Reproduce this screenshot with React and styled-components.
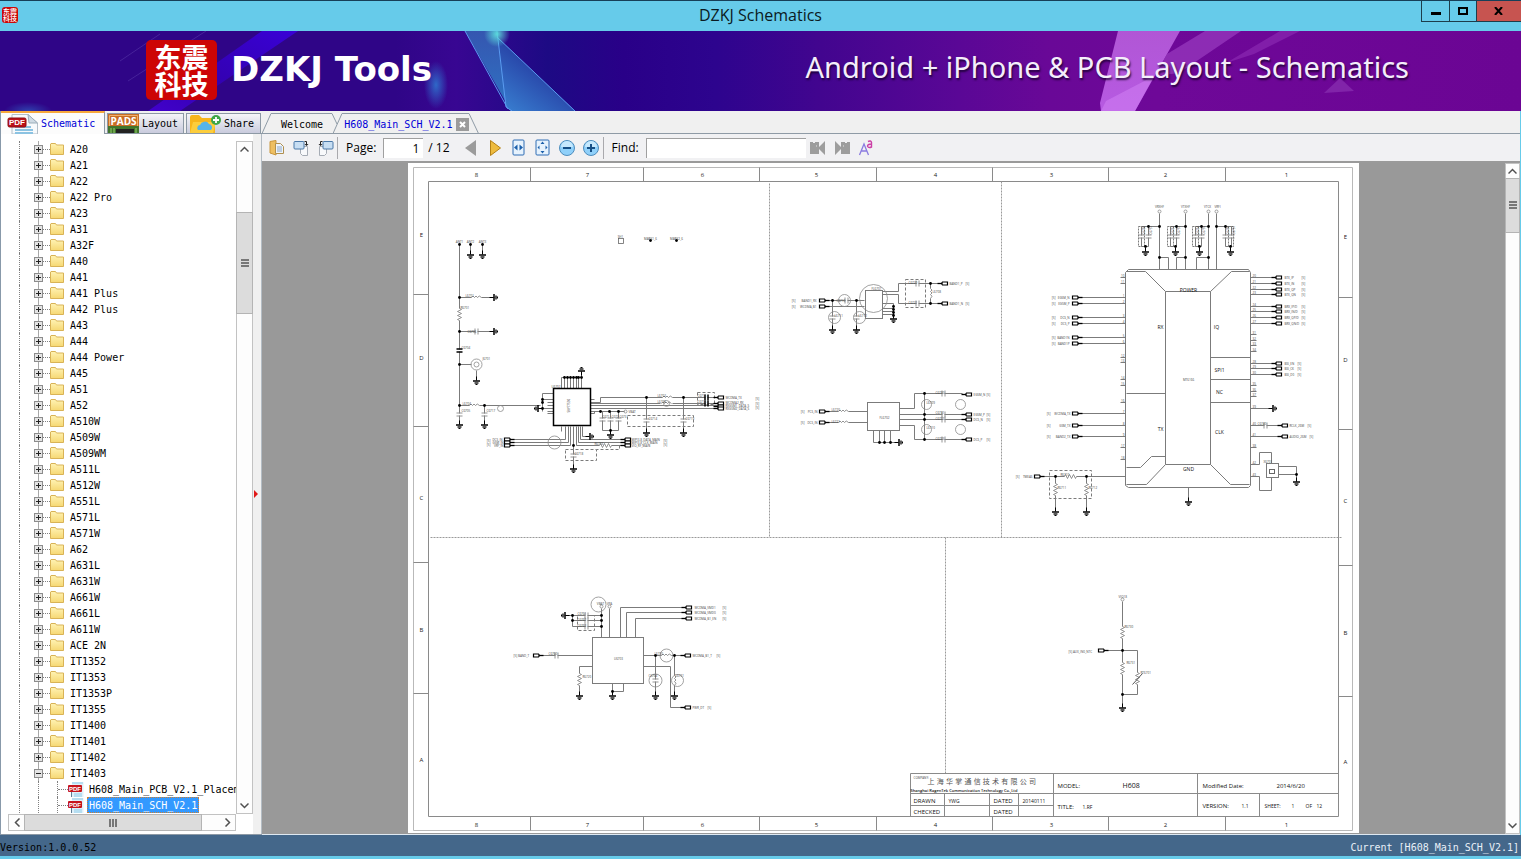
import React from 'react';
import styled, { createGlobalStyle } from 'styled-components';

const mono = '"DejaVu Sans Mono", "Liberation Mono", monospace';
const sans = '"Open Sans", "Noto Sans", sans-serif';
const cjk = '"Noto Sans CJK SC", sans-serif';

const GlobalStyle = createGlobalStyle`
  * { box-sizing: border-box; }
  html, body, #root { height: 100%; }
  body { margin: 0; overflow: hidden; font-family: ${mono}; font-size: 10px; color: #000; }
  button, input { font: inherit; color: inherit; margin: 0; padding: 0; border: 0; background: none; border-radius: 0; }
  svg { display: block; flex: none; }
  ul { list-style: none; margin: 0; padding: 0; }
`;

const Window = styled.div`
  display: flex;
  flex-direction: column;
  height: 100%;
  border-bottom: 3px solid #66cbea;
  background: #f0f0f0;
`;

const TitleBar = styled.header`
  display: grid;
  grid-template-columns: 1fr auto 1fr;
  flex: none;
  height: 31px;
  border-top: 1px solid #173f58;
  background: #66cbea;
`;

const TitleText = styled.h1`
  margin: 0;
  font: 400 16px/29px ${sans};
  color: #0b1a22;
`;

const AppIcon = styled.div`
  width: 16px;
  height: 16px;
  margin: 6px 0 0 2px;
  padding-top: 1px;
  border-radius: 3px;
  background: #cb0808;
  color: #fff;
  font: 500 7px/7px ${cjk};
  text-align: center;
`;

const WindowButtons = styled.div`
  display: flex;
  justify-self: end;
  height: 21px;
  border-left: 1px solid #1d3d4b;
  border-bottom: 1px solid #1d3d4b;
`;

const WindowButton = styled.button`
  display: flex;
  align-items: center;
  justify-content: center;
  width: ${(p) => (p.$close ? 45 : 27)}px;
  background: ${(p) => (p.$close ? '#c75450' : 'transparent')};
  & + & { border-left: 1px solid #1d3d4b; }
`;

const Banner = styled.div`
  position: relative;
  display: flex;
  align-items: center;
  flex: none;
  height: 80px;
  padding: 0 112px 0 146px;
  overflow: hidden;
  color: #fff;
  background: linear-gradient(90deg, #2f0587 0, #2f0587 26%, #380692 30%, #1d0a84 36%, #290088 41%, #2d048e 47%, #42058f 54%, #5a0796 63%, #690897 69%, #6e0898 76%, #6b0594 100%);
`;

const BannerArt = styled.svg`
  position: absolute;
  inset: 0;
`;

const Logo = styled.div`
  position: relative;
  width: 71px;
  height: 60px;
  margin-top: -2px;
  padding: 3px 6px;
  border-radius: 5px;
  background: #cd0505;
  font: 700 27px/27px ${cjk};
  text-align: center;
`;

const Brand = styled.div`
  position: relative;
  flex: 1;
  margin: -4px 0 0 14px;
  font: 700 34px/40px "DejaVu Sans", sans-serif;
  white-space: nowrap;
`;

const Slogan = styled.div`
  position: relative;
  margin-top: -8px;
  font: 400 29px/36px "Noto Sans", sans-serif;
  color: #f4eefb;
  text-shadow: 1px 2px 2px rgba(20, 0, 40, 0.8);
  white-space: nowrap;
`;

const Workspace = styled.div`
  display: flex;
  flex: 1;
  min-height: 0;
  border-right: 1px solid #66cbea;
`;

const Sidebar = styled.aside`
  display: flex;
  flex-direction: column;
  flex: none;
  width: 262px;
  border-left: 1px solid #8899aa;
`;

const SideTabs = styled.nav`
  display: flex;
  align-items: flex-end;
  gap: 2px;
  height: 23px;
  border-bottom: 1px solid #8d99a5;
`;

const SideTab = styled.button`
  display: flex;
  align-items: center;
  gap: ${(p) => (p.$active ? 2 : 3)}px;
  width: ${(p) => p.$width}px;
  height: ${(p) => (p.$active ? 23 : 20)}px;
  margin-bottom: ${(p) => (p.$active ? -1 : 0)}px;
  padding-left: ${(p) => (p.$active ? 6 : 0)}px;
  overflow: hidden;
  border: 1px solid #8d99a5;
  border-bottom: 0;
  border-top: ${(p) => (p.$active ? '2px solid #f7a83c' : '1px solid #8d99a5')};
  border-left-width: ${(p) => (p.$active ? 0 : 1)}px;
  background: ${(p) => (p.$active ? '#fcfcfc' : 'linear-gradient(#f5f5f8, #c9cbdd)')};
  color: ${(p) => (p.$active ? '#0000d8' : '#000')};
`;

const SideBody = styled.div`
  display: flex;
  flex: 1;
  min-height: 0;
  border-bottom: 1px solid #8d99a5;
`;

const TreePane = styled.div`
  display: grid;
  grid-template-columns: 1fr 17px;
  grid-template-rows: 1fr 17px;
  flex: 1;
  min-width: 0;
  padding: 7px 0 3px 7px;
  background: #fff;
`;

const Splitter = styled.div`
  display: flex;
  align-items: center;
  width: 9px;
  padding-top: 20px;
  border-right: 1px solid #b3bcc4;
  background: #f0f0f0;
`;

const Tree = styled.ul`
  min-height: 0;
  overflow: hidden;
  background: #fff;
`;

const TreeRow = styled.li`
  display: flex;
  align-items: center;
  height: 16px;
  white-space: nowrap;
`;

const Guide = styled.span`
  flex: none;
  align-self: stretch;
  width: ${(p) => p.$width}px;
  margin-left: ${(p) => p.$left}px;
  border-left: 1px dotted #808080;
`;

const Branch = styled.span`
  flex: none;
  width: ${(p) => p.$width}px;
  border-top: 1px dotted #808080;
`;

const ExpanderCell = styled.span`
  display: flex;
  align-items: center;
  justify-content: center;
  flex: none;
  width: 9px;
  height: 16px;
  background: linear-gradient(90deg, transparent 4px, #a8a8a8 4px, #a8a8a8 5px, transparent 5px);
`;

const Expander = styled.button`
  display: flex;
  align-items: center;
  justify-content: center;
  width: 9px;
  height: 9px;
  border: 1px solid #8c8c8c;
  background: #e4e4e4;
`;

const NodeLabel = styled.button`
  height: 16px;
  margin-left: ${(p) => (p.$file ? 3 : 4)}px;
  padding: 1px 1px 0;
  line-height: 13px;
  border: 1px ${(p) => (p.$selected ? 'dotted #d08030' : 'solid transparent')};
  background: ${(p) => (p.$selected ? '#3399ff' : 'transparent')};
  color: ${(p) => (p.$selected ? '#fff' : '#000')};
`;

const Scroll = styled.div`
  display: flex;
  flex-direction: ${(p) => (p.$horizontal ? 'row' : 'column')};
  flex: none;
  ${(p) => (p.$horizontal ? 'height' : 'width')}: ${(p) => p.$size}px;
  border: 1px solid #c2c2c2;
  background: #fdfdfd;
`;

const ScrollArrow = styled.button`
  display: flex;
  align-items: center;
  justify-content: center;
  flex: none;
  width: ${(p) => (p.$horizontal ? '16px' : '100%')};
  height: ${(p) => (p.$horizontal ? '100%' : '15px')};
`;

const ScrollSpace = styled.span`
  flex: ${(p) => p.$grow} 0 0;
`;

const ScrollThumb = styled.span`
  display: flex;
  align-items: center;
  justify-content: center;
  flex: ${(p) => p.$grow} 0 0;
  background: #dcdcdc;
  box-shadow: 0 0 0 1px #b4b4b4;
`;

const Documents = styled.main`
  display: flex;
  flex-direction: column;
  flex: 1;
  min-width: 0;
`;

const DocTabs = styled.nav`
  display: flex;
  height: 23px;
  padding-top: 2px;
  border-bottom: 1px solid #8f9ba6;
`;

const DocTab = styled.button`
  display: flex;
  height: 21px;
  margin-right: -9px;
  color: ${(p) => (p.$active ? '#0000d8' : '#000')};
`;

const DocTabLabel = styled.span`
  display: flex;
  align-items: center;
  gap: 3px;
  height: 21px;
  padding: 1px ${(p) => (p.$active ? 0 : 9)}px 0 ${(p) => (p.$active ? 2 : 10)}px;
  border-top: 1px solid #8f9ba6;
`;

const Toolbar = styled.div`
  display: flex;
  align-items: center;
  flex: none;
  height: 29px;
  padding-left: 3px;
  border-bottom: 2px solid #9a9a9a;
  background: #f1f1f3;
  font: 400 12px/16px ${sans};
`;

const ToolButton = styled.button`
  display: flex;
  align-items: center;
  justify-content: center;
  flex: none;
  width: 24px;
  height: 24px;
`;

const Divider = styled.span`
  width: 1px;
  height: 22px;
  margin-right: 8px;
  background: #a9a9ad;
`;

const Field = styled.label`
  display: flex;
  align-items: center;
  gap: 7px;
`;

const TextBox = styled.input`
  width: ${(p) => p.$width}px;
  height: 20px;
  padding: 0 4px;
  border-top: 1px solid #a0a0a0;
  border-left: 1px solid #a0a0a0;
  background: #fff;
  text-align: right;
`;

const PageTotal = styled.span`
  margin: 0 9px 0 5px;
`;

const Viewer = styled.div`
  display: flex;
  flex: 1;
  min-height: 0;
  border-bottom: 1px solid #dfe9f2;
  background: #999;
`;

const Canvas = styled.div`
  display: flex;
  justify-content: center;
  flex: 1;
  min-width: 0;
  overflow: hidden;
`;

const Sheet = styled.svg`
  background: #fff;
  font-family: ${sans};
`;

const StatusBar = styled.footer`
  display: flex;
  justify-content: space-between;
  align-items: center;
  flex: none;
  height: 21px;
  padding: 4px 2px 0 0;
  background: #44678a;
  span + span { color: #e8f0f8; }
`;

/* ---------- interface icons ---------- */

const Plus = ({ minus }) => (
  <svg width="5" height="5"><path d={minus ? 'M0 2.5h5' : 'M0 2.5h5M2.5 0v5'} stroke="#222" /></svg>
);

const Folder = () => (
  <svg width="14" height="12" viewBox="0 0 14 12">
    <defs><linearGradient id="fold" x2="0" y2="1"><stop stopColor="#fff3b4" /><stop offset="1" stopColor="#f6d873" /></linearGradient></defs>
    <path d="M.5 11.5V1L1 .5h4.500l1 1.500h7v9.500z" fill="url(#fold)" stroke="#d9b356" />
  </svg>
);

const PdfFile = () => (
  <svg width="16" height="15" viewBox="0 0 16 15">
    <path d="M4 0h11.500v15H4z" fill="#dff0fa" />
    <path d="M4 1h11M6 12h8M6 14h8" stroke="#8ccbe8" />
    <path d="M3.500 10v5" stroke="#5f7d95" />
    <rect y="3" width="14" height="7" rx="1" fill="#c6141c" />
    <text x="7" y="9" fontSize="6" fontWeight="700" fill="#fff" textAnchor="middle" fontFamily="Liberation Sans">PDF</text>
  </svg>
);

const PdfLarge = () => (
  <svg width="32" height="20" viewBox="0 0 32 20">
    <path d="M5 20V.5h16L30.500 9v11z" fill="#f7fafc" stroke="#b4bfc8" />
    <path d="M21 .5L30.500 9H22z" fill="#cfdbe4" stroke="#9badb9" />
    <path d="M8 13h16M8 16h18M8 19h18" stroke="#8cc3e2" strokeWidth="2" />
    <rect x="1" y="4" width="18" height="9" rx="1.500" fill="#bb1119" stroke="#8d0c12" />
    <text x="10" y="11" fontSize="8" fontWeight="700" fill="#fff" textAnchor="middle" fontFamily="Liberation Sans">PDF</text>
  </svg>
);

const PadsIcon = () => (
  <svg width="31" height="19" viewBox="0 0 31 19">
    <rect width="31" height="19" fill="#c96d25" />
    <path d="M0 12h31v7H0z" fill="#41752c" />
    <path d="M8 15h18v4H8z" fill="#222" />
    <path d="M3 14v5M6 14v5M28 14v5" stroke="#95d36a" />
    <path d="M1.500 12V1.500h28V12" fill="none" stroke="#efb06c" />
    <text x="15.500" y="11" fontSize="10" fontWeight="700" fill="#fff" textAnchor="middle" fontFamily="Open Sans">PADS</text>
  </svg>
);

const ShareIcon = () => (
  <svg width="34" height="19" viewBox="-2 0 34 19">
    <path d="M1 19V3q0-2 2-2h7l3 3h11q2 0 2 2v13z" fill="#f7b51c" />
    <path d="M1 19L4 8h23l-3 11z" fill="#fccd3c" />
    <path d="M9 16a3 3 0 0 1 2-5 5 5 0 0 1 9-1 3.500 3.500 0 0 1 2 6z" fill="#55b4ea" />
    <circle cx="27" cy="6" r="5" fill="#3fa648" />
    <path d="M24 6h6M27 3v6" stroke="#fff" strokeWidth="1.800" />
  </svg>
);

const Chevron = ({ dir }) => (
  <svg width="9" height="9" viewBox="0 0 9 9">
    <path d="M.500 6.500l4-4 4 4" fill="none" stroke="#505050" strokeWidth="1.500" transform={`rotate(${{ up: 0, right: 90, down: 180, left: 270 }[dir]} 4.500 4.500)`} />
  </svg>
);

const Grip = ({ horizontal }) => (
  <svg width="8" height="8" viewBox="0 0 8 8">
    <path d={horizontal ? 'M1 0v8M4 0v8M7 0v8' : 'M0 1h8M0 4h8M0 7h8'} stroke="#555" strokeWidth="1.500" />
  </svg>
);

const EdgeLeft = () => <svg width="9" height="21"><path d="M0 20.500L9 .5" fill="none" stroke="#8f9ba6" /></svg>;
const EdgeRight = ({ covered }) => (
  <svg width="10" height="21"><path d={covered ? 'M0 .5L5 11' : 'M0 .5L9.500 20.500'} fill="none" stroke="#8f9ba6" /></svg>
);
const CloseMark = () => (
  <svg width="13" height="13"><rect width="13" height="13" fill="#9b9b9b" /><path d="M4 4l5 5M9 4l-5 5" stroke="#fff" strokeWidth="2" /></svg>
);

const PasteIcon = () => (
  <svg width="16" height="16" viewBox="0 0 16 16">
    <path d="M1 1.500l6-1V15l-6-2z" fill="#eebf62" stroke="#c9963c" />
    <path d="M6.500 3.500h5l3 3v7h-8z" fill="#eef4fb" stroke="#b09050" />
    <path d="M8 7h5M8 9h5M8 11h5" stroke="#8aa6c8" />
  </svg>
);

const RotateIcon = ({ flip }) => (
  <svg width="17" height="16" viewBox="0 0 17 16">
    <g transform={flip ? 'translate(17 0) scale(-1 1)' : undefined}>
      <path d="M7.500 6.500h7v9h-5l-2-2z" fill="#f8f9fb" stroke="#a6acb5" />
      <rect x="1" y="1.500" width="10" height="7.500" rx="1" fill="#c7def3" stroke="#4a78a8" />
      <path d="M11.500 1.500h2v3" fill="none" stroke="#222" /><path d="M11.500 4h4L13.500 6z" fill="#222" />
    </g>
  </svg>
);

const Arrow = ({ back }) => (
  <svg width="14" height="18" viewBox="0 0 14 18">
    {back ? <path d="M12 1v16L1 9z" fill="#9b9b9b" /> : <path d="M2.500 1.500v15L12.500 9z" fill="#eebb3e" stroke="#b58116" />}
  </svg>
);

const FitIcon = ({ page }) => (
  <svg width="15" height="17" viewBox="0 0 15 17">
    <rect x={page ? 1 : 2} y="1" width={page ? 13 : 11} height="15" rx="1" fill="#e6f2fd" stroke="#2e6db4" />
    {page
      ? <path d="M7.500 2.500l2 2.500h-4zM7.500 14.500l2-2.500h-4zM2.500 8.500l2-2v4zM12.500 8.500l-2-2v4z" fill="#1c60ac" />
      : <path d="M6.500 5.500L3 8.500l3.500 3zM8.500 5.500l3.500 3-3.500 3z" fill="#1c60ac" />}
  </svg>
);

const ZoomIcon = ({ plus }) => (
  <svg width="18" height="18" viewBox="0 0 18 18">
    <circle cx="9" cy="9" r="7.500" fill="#8fd0fa" stroke="#4e8dbd" />
    <path d="M3 8a6 6 0 0 1 12 0z" fill="#c5e8fd" />
    <path d={plus ? 'M5 9h8M9 5v8' : 'M5 9h8'} stroke="#154f86" strokeWidth="2" />
  </svg>
);

const FindIcon = ({ next }) => (
  <svg width="16" height="16" viewBox="0 0 16 16">
    <g transform={next ? 'translate(16 0) scale(-1 1)' : undefined}>
      <path d="M0 2h3v1h2V2h4v5l6-6v14l-6-6v5H0z" fill="#9d9d9d" />
      <path d="M6 6h1" stroke="#e6e6e6" />
    </g>
  </svg>
);

const CaseIcon = () => (
  <svg width="16" height="18" viewBox="0 0 16 18">
    <path d="M1.500 16L6 5l4.500 11M3 12h6" fill="none" stroke="#8a7be0" strokeWidth="1.300" />
    <path d="M10 2.500q3-1.500 3.500 1V8q-3 1.200-4-.8Q9.500 5 13.500 5" fill="none" stroke="#cc3fa6" strokeWidth="1.400" />
  </svg>
);

/* ---------- schematic symbols ---------- */

const INK = '#7b7b7b';

const Wires = ({ d, dash, color = INK, width = 1 }) => (
  <path d={d} fill="none" stroke={color} strokeWidth={width} strokeDasharray={dash} />
);

const Dots = ({ at }) => at.map(([x, y]) => <circle key={`${x},${y}`} cx={x} cy={y} r="1.400" fill="#000" />);

const Rings = ({ at }) => at.map(([x, y, r]) => <circle key={`${x},${y},${r}`} cx={x} cy={y} r={r} fill="none" stroke="#8a8a8a" strokeWidth=".8" />);

const Grounds = ({ at }) => at.map(([x, y, turn = 0]) => (
  <g key={`${x},${y}`} transform={`translate(${x} ${y}) rotate(${turn})`} stroke="#000">
    <path d="M0-5v4" strokeWidth="1" />
    <path d="M-3.500-.500h7" strokeWidth="1.500" />
    <path d="M-2 1.500h4" strokeWidth="1.300" />
    <path d="M-1 3h2" strokeWidth="1" />
  </g>
));

const Ports = ({ at, left }) => at.map(([x, y]) => (
  <g key={`${x},${y}`} transform={`translate(${x} ${y}) scale(${left ? -1 : 1} 1)`}>
    <path d="M-3-1.500h5L3 0 2 1.500h-5z" fill="#fff" stroke="#000" strokeWidth="1.200" />
    <path d="M2 0h5" stroke="#000" strokeWidth="1.300" />
  </g>
));

const Caps = ({ at, bold }) => at.map(([x, y, upright]) => (
  <g key={`${x},${y}`} transform={`translate(${x} ${y}) rotate(${upright ? 90 : 0})`}>
    <path d="M-1 0h2" stroke="#fff" strokeWidth="2" />
    <path d="M-1.500-3v6M1.500-3v6" stroke={bold ? '#000' : '#888'} strokeWidth={bold ? 1.500 : 0.900} />
  </g>
));

const Zigzags = ({ at }) => at.map(([x, y, upright]) => (
  <g key={`${x},${y}`} transform={`translate(${x} ${y}) rotate(${upright ? 90 : 0})`}>
    <path d="M-6 0h12" stroke="#fff" strokeWidth="2" />
    <path d="M-6 0l1-2 2 4 2-4 2 4 2-4 2 4 1-2" fill="none" stroke="#777" strokeWidth=".8" />
  </g>
));

const Coils = ({ at }) => at.map(([x, y, upright]) => (
  <g key={`${x},${y}`} transform={`translate(${x} ${y}) rotate(${upright ? 90 : 0})`}>
    <path d="M-5 0h10" stroke="#fff" strokeWidth="2" />
    <path d="M-5 0q1.500-3 3 0 1.500-3 3 0 1.500-3 4 0" fill="none" stroke="#777" strokeWidth=".8" />
  </g>
));

const Notes = ({ at, size = 3, anchor = 'start', fill = '#444', weight = 400 }) => at.map(([x, y, t]) => (
  <text key={`${x},${y},${t}`} x={x} y={y} fontSize={size} textAnchor={anchor} fill={fill} fontWeight={weight}>{t}</text>
));

const xTicks = [530, 643, 759, 876, 992, 1108, 1225];
const columnsAt = [476, 587, 702, 816, 935, 1051, 1165, 1286];
const leftTicks = [294, 426, 562, 693];
const rightTicks = [297, 429, 565, 696];
const leftLetters = [234, 357, 497, 629, 759];
const rightLetters = [236, 359, 500, 632, 761];

const SheetFrame = () => (
  <g>
    <Wires color="#b9b9b9" d="M413 167H1352V830H413z" />
    <Wires color="#8a8a8a" d={`M428 181H1338V816H428z${xTicks.map((x) => `M${x} 167V181M${x} 816V830`).join('')}${leftTicks.map((y) => `M413 ${y}H428`).join('')}${rightTicks.map((y) => `M1338 ${y}H1352`).join('')}`} />
    <Wires color="#9a9a9a" dash="2 1" d="M769 183V537M1001 181V537M430 537H1341M945 537V773" />
    <Notes size={6} anchor="middle" fill="#222" at={columnsAt.flatMap((x, i) => [[x, 176, 8 - i], [x, 826, 8 - i]])} />
    <Notes size={6} anchor="middle" fill="#222" at={leftLetters.map((y, i) => [421, y + 2, 'EDCBA'[i]])} />
    <Notes size={6} anchor="middle" fill="#222" at={rightLetters.map((y, i) => [1345, y + 2, 'EDCBA'[i]])} />
  </g>
);

const pinXs = [561, 564, 567, 570, 573, 576, 578, 581];

const AntennaSwitch = () => (
  <g>
    <Wires d="M459 244V424M470 244V252M482 244V252M459 297H494M459 331H494M459 364H471M476 370V378M459 405H540M484 405V424" />
    <Wires d="M542 393V411M537 408H553M542 393H553M542 399H553M547 402H553M547 405H553M547 411H553M547 413H553M590 399H594M590 402H600V397H718M590 405H718M590 408H718M590 411H624M590 413H594M594 411V413" />
    <Wires d={pinXs.map((x) => `M${x} 377V388`).join('') + 'M561 377H581V371'} />
    <Wires d="M511 439H565V426M511 442H568V426M511 445H570V426M561 426V431M573 426V469M576 426V445H622M578 426V442H622M580 426V439H622M582 426V436H588" />
    <Wires d="M590 403H660M672 403H718M646 397V432M683 397V432M602 411V430H618V411M610 411V432" />
    <rect x="553" y="388" width="37" height="37" fill="#fff" stroke="#000" strokeWidth="1.500" />
    <Wires dash="3 2" d="M697 392H714V404H697zM627 415H693V426H627zM565 449H596V460H565zM619 445V449H596" />
    <Zigzags at={[[459, 314, true], [605, 445]]} />
    <Coils at={[[476, 297], [474, 405], [667, 397], [666, 403]]} />
    <Caps at={[[476, 331], [459, 414, true], [484, 414, true], [646, 420, true], [683, 420, true], [602, 419, true], [610, 419, true], [618, 419, true], [573, 455, true]]} />
    <Caps bold at={[[459, 350, true], [706, 397], [706, 403]]} />
    <Rings at={[[476, 364, 5.500], [476, 364, 2.500], [500, 408, 3], [554, 442, 6.500], [666, 403, 3], [625, 411, 1.500]]} />
    <Dots at={[[459, 244], [470, 244], [482, 244], [459, 297], [459, 331], [459, 364], [459, 405], [484, 405], [542, 399], [542, 402], [542, 408], [646, 397], [683, 397], [600, 411], [609, 411], [618, 411], [610, 430], [573, 445], [650, 240], [676, 240], ...pinXs.slice(1).map((x) => [x, 377])]} />
    <Grounds at={[[470, 255], [482, 255], [494, 297, -90], [494, 331, -90], [476, 381], [459, 425], [484, 425], [537, 408, 90], [581, 370, 180], [646, 433], [683, 433], [610, 435], [590, 436, -90], [573, 469]]} />
    <Ports at={[[507, 439], [507, 442], [507, 445]]} />
    <Ports left at={[[720, 397], [720, 403], [720, 406], [720, 408], [627, 439], [627, 442], [627, 445]]} />
    <rect x="618" y="238" width="5" height="5" fill="none" stroke="#666" strokeWidth=".8" />
    <Notes anchor="end" at={[[502, 440, 'DCS_IN'], [503, 443, 'GSM_IN'], [503, 446, 'VRF_IN'], [490, 441, '[5]'], [490, 445, '[5]']]} />
    <Notes at={[[725, 398, 'WCDMA_TX'], [725, 403, 'WCDMA2_RX'], [725, 406, 'RXGSM1_DATA_S'], [725, 409, 'RXGSM2_DATA_S'], [755, 399, '[5]'], [755, 404, '[5]'], [755, 408, '[5]'], [631, 440, 'MIPI3.8_DATA_MAIN'], [631, 443, 'MIPI3.8_CLK_MAIN'], [631, 446, 'VIO_RF_MAIN'], [663, 441, '[5]'], [663, 445, '[5]'], [628, 412, 'VBAT'], [551, 387, 'U6702']]} />
    <Notes at={[[465, 296, 'L6701'], [460, 308, 'R6701'], [467, 332, 'C6706'], [461, 348, 'C6704'], [482, 359, 'J6701'], [462, 404, 'L6704'], [461, 411, 'C6705'], [486, 411, 'C6717'], [657, 396, 'L6702'], [657, 402, 'L6706'], [648, 419, 'C6714'], [685, 419, 'C6719'], [574, 454, 'C6718'], [697, 396, 'C6715'], [697, 402, 'C6716'], [594, 444, 'R6703'], [602, 417, 'C671'], [611, 417, 'C672'], [619, 417, 'C673']]} />
    <Notes anchor="middle" at={[[459, 242, 'ANT1'], [470, 242, 'ANT2'], [482, 242, 'ANT3'], [620, 237, 'SH1'], [650, 239, 'MARK1_6'], [676, 239, 'MARK2_6']]} />
    <text transform="translate(569 412) rotate(-90)" fontSize="3" fill="#444">SKY77590</text>
  </g>
);

const Filters = () => (
  <g>
    <Wires d="M826 300H864M826 306H864M832 300V330M856 300V330M882 291H898V283H938M882 294H898V303H938M930 283V303M882 303H893V318M882 308H893M882 311H893M882 314H893" />
    <Rings at={[[844, 300, 6], [834, 317, 6], [859, 317, 6], [873, 298, 14]]} />
    <rect x="865" y="290" width="17" height="28" fill="none" stroke={INK} />
    <Wires dash="3 2" d="M905 279H925V307H905z" />
    <Caps at={[[846, 300], [832, 317, true], [856, 317, true], [917, 283], [917, 303]]} />
    <Coils at={[[930, 293, true]]} />
    <Dots at={[[832, 300], [856, 300], [930, 283], [930, 303], [893, 306], [893, 309], [893, 312], [893, 315]]} />
    <Grounds at={[[832, 330], [856, 330], [893, 319]]} />
    <Ports at={[[822, 300], [822, 306]]} />
    <Ports left at={[[944, 283], [944, 303]]} />
    <Notes anchor="end" at={[[816, 301, 'BAND1_RX'], [816, 307, 'WCDMA_B1'], [795, 301, '[5]'], [795, 307, '[5]']]} />
    <Notes at={[[871, 289, 'FL6701'], [836, 301, 'C6710'], [834, 316, 'L6711'], [858, 316, 'L6712'], [908, 283, 'C6720'], [908, 303, 'C6721'], [932, 292, 'L6708'], [949, 284, 'BAND1_P'], [949, 304, 'BAND1_N'], [965, 284, '[5]'], [965, 304, '[5]']]} />

    <rect x="867" y="402" width="32" height="28" fill="none" stroke={INK} />
    <Wires d="M826 411H867M826 422H867M899 408H914V393H962M899 414H962M899 419H962M899 425H914V439H962M924 393V439M873 430V442H898M879 430V442M884 430V442M890 430V442" />
    <Coils at={[[843, 411], [843, 422]]} />
    <Caps at={[[943, 393], [943, 414], [943, 419], [943, 439]]} />
    <Rings at={[[926, 404, 5], [960, 404, 5], [926, 429, 5], [960, 429, 5]]} />
    <Dots at={[[924, 393], [924, 414], [924, 419], [924, 439], [879, 442], [884, 442], [890, 442]]} />
    <Grounds at={[[899, 442, -90]]} />
    <Ports at={[[822, 411], [822, 422]]} />
    <Ports left at={[[968, 394], [968, 414], [968, 419], [968, 439]]} />
    <Notes anchor="end" at={[[817, 412, 'PCS_IN'], [817, 423, 'DCS_IN'], [804, 412, '[5]'], [804, 423, '[5]']]} />
    <Notes at={[[831, 410, 'L6720'], [831, 422, 'L6721'], [879, 418, 'FL6702'], [935, 393, 'C6730'], [935, 413, 'C6731'], [935, 419, 'C6732'], [935, 439, 'C6733'], [926, 403, 'L6709'], [926, 428, 'L6710'], [973, 395, 'EGSM_N'], [973, 415, 'EGSM_P'], [973, 420, 'DCS_N'], [973, 440, 'DCS_P'], [986, 395, '[5]'], [986, 415, '[5]'], [986, 420, '[5]'], [986, 440, '[5]']]} />
  </g>
);

const rxPins = [297, 303, 317, 323, 337, 343];
const txPins = [413, 425, 436];
const iqPins = [277, 283, 289, 294, 306, 311, 317, 323];
const spiPins = [363, 368, 374];
const leftStubs = [277, 283, 357, 362, 379, 385, 402, 447, 459];
const rightStubs = [334, 340, 345, 351, 385, 391, 396, 447];
const supplyCaps = [[1141, 1148, 1145], [1170, 1176, 1175], [1195, 1201, 1199], [1225, 1231, 1230]];

const Transceiver = () => (
  <g>
    <Wires d="M1128 269H1248L1250 272V485L1248 487H1128L1125 485V272zM1165 291H1210V464H1165zM1126 271H1145L1165 291M1210 291L1231 271H1249M1165 464L1146 484H1126M1210 464L1230 484H1249M1126 393H1165M1126 467H1140L1151 456H1165M1210 357H1250M1210 379H1250M1210 402H1250" />
    <Wires d={[...rxPins, ...txPins].map((y) => `M1080 ${y}H1125`).join('') + leftStubs.map((y) => `M1120 ${y}H1125`).join('') + [...iqPins, ...spiPins].map((y) => `M1250 ${y}H1272`).join('') + rightStubs.map((y) => `M1250 ${y}H1256`).join('')} />
    <Wires d="M1159 213V269M1185 213V269M1208 213V269M1216 213V269M1159 257H1168V269M1185 257H1176V269M1208 257H1196V269M1141 226H1159M1170 226H1185M1195 226H1208M1216 226H1231" />
    <Wires d={supplyCaps.map(([a, b]) => `M${a} 226V246M${b} 226V246M${a} 246H${b}`).join('')} />
    <Wires dash="2 1" d={supplyCaps.map(([a, b], i) => (i < 3 ? `M${a - 3} 226H${a + 3}V246H${a - 3}z` : `M${b - 3} 226H${b + 2}V246H${b - 3}z`)).join('')} />
    <Wires d="M1041 476H1125M1055 476V510M1086 476V510M1188 487V499M1250 408H1272M1250 425H1278M1250 436H1278M1250 464H1259V452H1271V463M1250 476H1259V490H1271V477M1278 466H1296V481M1278 474H1296" />
    <Wires dash="3 2" d="M1049 470H1091V498H1049z" />
    <rect x="1266" y="463" width="12" height="14" fill="none" stroke={INK} />
    <rect x="1269" y="469" width="5" height="4" fill="none" stroke="#666" />
    <Caps at={[...supplyCaps.flatMap(([a, b]) => [[a, 236, true], [b, 236, true]]), [1265, 425]]} />
    <Zigzags at={[[1070, 476], [1055, 489, true], [1086, 489, true]]} />
    <Rings at={[[1159, 211, 1.500], [1185, 211, 1.500], [1208, 211, 1.500], [1216, 211, 1.500]]} />
    <Dots at={[[1148, 226], [1159, 226], [1176, 226], [1185, 226], [1201, 226], [1208, 226], [1216, 226], [1225, 226], [1145, 246], [1175, 246], [1199, 246], [1230, 246], [1159, 257], [1185, 257], [1208, 257], [1055, 476], [1086, 476], [1296, 474]]} />
    <Grounds at={[...supplyCaps.map((c) => [c[2], 252]), [1055, 512], [1086, 512], [1188, 502], [1273, 408, -90], [1296, 482]]} />
    <Ports at={[...rxPins, ...txPins].map((y) => [1075, y]).concat([[1037, 476]])} />
    <Ports left at={[...[...iqPins, ...spiPins].map((y) => [1278, y]), [1284, 425], [1284, 436]]} />
    <Notes anchor="middle" size={5} fill="#111" at={[[1188, 291, 'POWER'], [1160, 328, 'RX'], [1216, 328, 'IQ'], [1219, 371, 'SPI1'], [1219, 393, 'NC'], [1160, 430, 'TX'], [1219, 433, 'CLK'], [1188, 470, 'GND']]} />
    <Notes anchor="middle" at={[[1159, 207, 'VRXHF'], [1185, 207, 'VTXHF'], [1207, 207, 'VTCX'], [1217, 207, 'VRFI'], [1188, 380, 'MT6166']]} />
    <Notes anchor="end" at={['EGSM_N', 'EGSM_P', 'DCS_N', 'DCS_P', 'BAND1N', 'BAND1P'].map((t, i) => [1069, rxPins[i] + 1, t]).concat([[1070, 414, 'WCDMA_TX'], [1070, 426, 'GSM_TX'], [1070, 437, 'BAND2_TX'], [1032, 477, 'TMEAS'], [1019, 477, '[5]']])} />
    <Notes anchor="end" at={[...rxPins.map((y) => [1055, y + 1, '[5]']), ...txPins.map((y) => [1050, y + 1, '[5]'])]} />
    <Notes at={['BTX_IP', 'BTX_IN', 'BTX_QP', 'BTX_QN', 'BRX_IP/D', 'BRX_IN/D', 'BRX_QP/D', 'BRX_QN/D'].map((t, i) => [1284, iqPins[i] + 1, t])} />
    <Notes at={[...iqPins.map((y) => [1301, y + 1, '[5]']), ...spiPins.map((y) => [1297, y + 1, '[5]']), [1284, 364, 'BSI_EN'], [1284, 369, 'BSI_CK'], [1284, 375, 'BSI_D0'], [1289, 426, 'RCLK_26M'], [1289, 437, 'AUDIO_26M'], [1307, 426, '[5]'], [1309, 437, '[5]'], [1257, 424, 'C6740'], [1263, 462, 'X6701'], [1060, 475, 'R6710'], [1057, 488, 'R6711'], [1088, 488, 'R6712']]} />
    <Notes anchor="end" at={[...rxPins, ...txPins, ...leftStubs].map((y, i) => [1124, y - 1, i + 1])} />
    <Notes at={[...iqPins, ...spiPins, ...rightStubs, 408, 425, 436, 464, 476].map((y, i) => [1252, y - 1, i + 20])} />
    {supplyCaps.flatMap(([a, b]) => [a, b]).map((x, i) => (
      <text key={x} transform={`translate(${x + 3} 234) rotate(-90)`} fontSize="3" fill="#444">{`C67${i + 50}`}</text>
    ))}
  </g>
);

const PowerAmp = () => (
  <g>
    <Wires d="M564 615H601M572 620H601M572 626H601M572 615V626M601 608V637M609 608V637M620 637V607H682M626 637V612H682M635 637V618H682M540 655H592M592 666H579V694M612 683V694M623 683V691H612M643 655H682M655 655V694M674 655V694M643 666H670V707H682" />
    <Wires dash="3 2" d="M577 615H594V630H577z" />
    <rect x="592" y="637" width="51" height="46" fill="none" stroke={INK} />
    <Caps at={[[586, 615], [586, 620], [586, 626], [556, 655], [655, 680, true]]} />
    <Zigzags at={[[579, 679, true]]} />
    <Coils at={[[666, 655], [674, 680, true]]} />
    <Rings at={[[598, 604, 7.500], [601, 606, 1.500], [609, 606, 1.500], [666, 655, 6.500], [655, 680, 6.500], [677, 680, 6]]} />
    <Dots at={[[572, 615], [572, 620], [601, 615], [601, 620], [601, 626], [612, 691], [655, 655], [674, 655]]} />
    <Grounds at={[[564, 615, 90], [579, 696], [612, 696], [655, 696], [674, 696]]} />
    <Ports at={[[536, 655]]} />
    <Ports left at={[[688, 607], [688, 612], [688, 618], [687, 655], [687, 707]]} />
    <Notes anchor="middle" at={[[600, 604, 'VBAT'], [609, 604, 'VPA'], [618, 659, 'U6703']]} />
    <Notes at={[[694, 608, 'WCDMA_VMD1'], [694, 613, 'WCDMA_VMD0'], [694, 619, 'WCDMA_B1_EN'], [722, 608, '[5]'], [722, 613, '[5]'], [722, 619, '[5]'], [692, 656, 'WCDMA_B1_T'], [716, 656, '[5]'], [692, 708, 'PWR_DT'], [707, 708, '[5]'], [513, 656, '[5] BAND_T'], [548, 654, 'C6760'], [577, 614, 'C6761'], [577, 620, 'C6762'], [577, 626, 'C6763'], [582, 677, 'R6720'], [648, 676, 'C6764'], [654, 654, 'L6730'], [675, 676, 'L6731']]} />
  </g>
);

const Thermistor = () => (
  <g>
    <Wires d="M1122 601V707M1105 650H1137V694H1122" />
    <Zigzags at={[[1122, 632, true], [1122, 668, true], [1137, 678, true]]} />
    <Wires d="M1132 684L1142 673" color="#555" />
    <Rings at={[[1122, 599, 1.500]]} />
    <Dots at={[[1122, 650], [1122, 694]]} />
    <Grounds at={[[1122, 708]]} />
    <Ports at={[[1101, 650]]} />
    <Notes at={[[1118, 597, 'VIO18'], [1124, 627, 'R6730'], [1126, 663, 'R6731'], [1140, 673, 'RT6701'], [1068, 652, '[5]  AUX_IN0_NTC']]} />
  </g>
);

const TitleBlock = () => (
  <g>
    <Wires color="#8a8a8a" d="M910 773H1338M910 773V816M910 793H1338M910 805H1053M944 793V816M989 793V816M1018 793V816M1053 773V816M1197 773V816M1259 793V816" />
    <text x="927" y="783" fontSize="7" fill="#555" fontFamily="'DejaVu Sans', 'Noto Sans CJK SC', sans-serif">上 海 华 掌 通 信 技 术 有 限 公 司</text>
    <Notes size={3} at={[[913, 778, 'COMPANY:']]} />
    <Notes size={4} fill="#111" weight={600} at={[[910, 791, 'Shanghai RagenTek Communication Technology Co.,Ltd']]} />
    <Notes size={5} fill="#111" at={[[948, 802, 'YWG'], [1022, 802, '20140111'], [1241, 807, '1.1'], [1264, 807, 'SHEET:'], [1305, 807, 'OF'], [1316, 807, '12'], [1291, 807, '1'], [1082, 808, '1.RF']]} />
    <Notes size={6} fill="#111" at={[[913, 802, 'DRAWN'], [913, 813, 'CHECKED'], [993, 802, 'DATED'], [993, 813, 'DATED'], [1057, 787, 'MODEL:'], [1057, 808, 'TITLE:'], [1202, 787, 'Modified Date:'], [1202, 807, 'VERSION:'], [1276, 787, '2014/6/20']]} />
    <Notes size={7} fill="#111" at={[[1122, 787, 'H608']]} />
  </g>
);

const SchematicSheet = () => (
  <Sheet width="951" height="670" viewBox="407.5 162.5 951 670" role="img" aria-label="H608 RF schematic">
    <SheetFrame />
    <AntennaSwitch />
    <Filters />
    <Transceiver />
    <PowerAmp />
    <Thermistor />
    <TitleBlock />
  </Sheet>
);

/* ---------- page ---------- */

const folders = ['A20', 'A21', 'A22', 'A22 Pro', 'A23', 'A31', 'A32F', 'A40', 'A41', 'A41 Plus', 'A42 Plus', 'A43', 'A44', 'A44 Power', 'A45', 'A51', 'A52', 'A510W', 'A509W', 'A509WM', 'A511L', 'A512W', 'A551L', 'A571L', 'A571W', 'A62', 'A631L', 'A631W', 'A661W', 'A661L', 'A611W', 'ACE 2N', 'IT1352', 'IT1353', 'IT1353P', 'IT1355', 'IT1400', 'IT1401', 'IT1402', 'IT1403'];

const FolderRow = ({ name, open }) => (
  <TreeRow>
    <Guide $left={11} $width={15} />
    <ExpanderCell><Expander aria-label={open ? 'Collapse' : 'Expand'}><Plus minus={open} /></Expander></ExpanderCell>
    <Branch $width={7} />
    <Folder />
    <NodeLabel>{name}</NodeLabel>
  </TreeRow>
);

const FileRow = ({ name, selected }) => (
  <TreeRow>
    <Guide $left={11} $width={19} />
    <Guide $left={0} $width={19} />
    <Guide $left={0} $width={1} />
    <Branch $width={10} />
    <PdfFile />
    <NodeLabel $file $selected={selected}>{name}</NodeLabel>
  </TreeRow>
);

const ScrollBar = ({ horizontal, size, before, thumb, after }) => (
  <Scroll $horizontal={horizontal} $size={size}>
    <ScrollArrow $horizontal={horizontal} aria-label="Scroll back"><Chevron dir={horizontal ? 'left' : 'up'} /></ScrollArrow>
    <ScrollSpace $grow={before} />
    <ScrollThumb $grow={thumb}><Grip horizontal={horizontal} /></ScrollThumb>
    <ScrollSpace $grow={after} />
    <ScrollArrow $horizontal={horizontal} aria-label="Scroll forward"><Chevron dir={horizontal ? 'right' : 'down'} /></ScrollArrow>
  </Scroll>
);

const BannerDrawing = () => (
  <BannerArt width="1521" height="80" viewBox="0 0 1521 80">
    <defs>
      <linearGradient id="beam" x1="1" y1="0" x2="0" y2="1"><stop stopColor="#3b00e4" /><stop offset=".6" stopColor="#3400b8" /><stop offset="1" stopColor="#4500d8" /></linearGradient>
      <linearGradient id="prism" x2="0" y2="1"><stop stopColor="#3556b0" /><stop offset="1" stopColor="#2e74c4" /></linearGradient>
      <linearGradient id="prism2" x1="0" y1="1" x2=".8" y2="0"><stop stopColor="#3a84d4" /><stop offset="1" stopColor="#1c1c8c" /></linearGradient>
      <linearGradient id="ribbon" x2="0" y2="1"><stop stopColor="#b85fdc" /><stop offset="1" stopColor="#bf63ea" /></linearGradient>
      <radialGradient id="glow"><stop stopColor="#2f68c8" /><stop offset="1" stopColor="#2f68c8" stopOpacity="0" /></radialGradient>
      <radialGradient id="spark"><stop stopColor="#5ad8dc" /><stop offset="1" stopColor="#5ad8dc" stopOpacity="0" /></radialGradient>
    </defs>
    <path d="M262 0h36L180 80h-32z" fill="url(#beam)" opacity=".85" />
    <path d="M206 0L128 50M160 3L120 30" stroke="#5636a8" opacity=".6" />
    <ellipse cx="436" cy="54" rx="12" ry="24" fill="url(#glow)" />
    <ellipse cx="28" cy="80" rx="24" ry="9" fill="url(#glow)" opacity=".6" />
    <path d="M465 0h32l10 76 4 4z" fill="url(#prism)" />
    <path d="M497 6l78 74h-64l-5-6z" fill="url(#prism2)" />
    <path d="M465 0l43 78M497 0l9 76 6 4M497 6l78 74" fill="none" stroke="#5a9cf0" />
    <circle cx="497" cy="3" r="13" fill="url(#spark)" />
    <path d="M1118 0h62l-45 80h-34l-1-8z" fill="url(#ribbon)" opacity=".9" />
    <path d="M1106 70l48-25-19 35h-34z" fill="#cf7df2" opacity=".6" />
    <path d="M1205 0h36l-62 42-24 3 12-22z" fill="#9a3cc0" opacity=".7" />
    <path d="M1280 0h20l-46 23-28 9z" fill="#8a28b0" opacity=".7" />
    <path d="M1340 47l14 13-30 2z" fill="#8124a9" />
  </BannerArt>
);

export default function App() {
  return (
    <Window>
      <GlobalStyle />
      <TitleBar>
        <AppIcon>东震<br />科技</AppIcon>
        <TitleText>DZKJ Schematics</TitleText>
        <WindowButtons>
          <WindowButton aria-label="Minimize"><svg width="10" height="10"><path d="M0 7.500h10" stroke="#000" strokeWidth="3" /></svg></WindowButton>
          <WindowButton aria-label="Maximize"><svg width="10" height="8"><rect x="1" y="1" width="8" height="6" fill="none" stroke="#000" strokeWidth="2" /></svg></WindowButton>
          <WindowButton $close aria-label="Close"><svg width="10" height="8"><path d="M1 0l7 8M8 0L1 8" stroke="#000" strokeWidth="2" /></svg></WindowButton>
        </WindowButtons>
      </TitleBar>
      <Banner>
        <BannerDrawing />
        <Logo>东震<br />科技</Logo>
        <Brand>DZKJ Tools</Brand>
        <Slogan>Android + iPhone &amp; PCB Layout - Schematics</Slogan>
      </Banner>
      <Workspace>
        <Sidebar>
          <SideTabs>
            <SideTab $active $width={104}><PdfLarge />Schematic</SideTab>
            <SideTab $width={77}><PadsIcon />Layout</SideTab>
            <SideTab $width={75}><ShareIcon />Share</SideTab>
          </SideTabs>
          <SideBody>
            <TreePane>
              <Tree>
                {folders.map((name) => <FolderRow key={name} name={name} open={name === 'IT1403'} />)}
                <FileRow name="H608_Main_PCB_V2.1_Placement" />
                <FileRow name="H608_Main_SCH_V2.1" selected />
              </Tree>
              <ScrollBar size={17} before={56} thumb={100} after={484} />
              <ScrollBar horizontal size={17} before={0} thumb={176} after={18} />
            </TreePane>
            <Splitter><svg width="6" height="10"><path d="M1 1l4 4-4 4z" fill="#e01818" /></svg></Splitter>
          </SideBody>
        </Sidebar>
        <Documents>
          <DocTabs>
            <DocTab><EdgeLeft /><DocTabLabel>Welcome</DocTabLabel><EdgeRight covered /></DocTab>
            <DocTab $active><EdgeLeft /><DocTabLabel $active>H608_Main_SCH_V2.1<CloseMark /></DocTabLabel><EdgeRight /></DocTab>
          </DocTabs>
          <Toolbar>
            <ToolButton aria-label="Copy"><PasteIcon /></ToolButton>
            <ToolButton aria-label="Rotate right"><RotateIcon /></ToolButton>
            <ToolButton aria-label="Rotate left"><RotateIcon flip /></ToolButton>
            <Divider />
            <Field>Page:<TextBox $width={40} defaultValue="1" /></Field>
            <PageTotal>/ 12</PageTotal>
            <ToolButton aria-label="Previous page"><Arrow back /></ToolButton>
            <ToolButton aria-label="Next page"><Arrow /></ToolButton>
            <ToolButton aria-label="Fit width"><FitIcon /></ToolButton>
            <ToolButton aria-label="Fit page"><FitIcon page /></ToolButton>
            <ToolButton aria-label="Zoom out"><ZoomIcon /></ToolButton>
            <ToolButton aria-label="Zoom in"><ZoomIcon plus /></ToolButton>
            <Divider />
            <Field>Find:<TextBox $width={160} defaultValue="" /></Field>
            <ToolButton aria-label="Find previous"><FindIcon /></ToolButton>
            <ToolButton aria-label="Find next"><FindIcon next /></ToolButton>
            <ToolButton aria-label="Match case"><CaseIcon /></ToolButton>
          </Toolbar>
          <Viewer>
            <Canvas><SchematicSheet /></Canvas>
            <ScrollBar size={15} before={0} thumb={53} after={589} />
          </Viewer>
        </Documents>
      </Workspace>
      <StatusBar>
        <span>Version:1.0.0.52</span>
        <span>Current [H608_Main_SCH_V2.1]</span>
      </StatusBar>
    </Window>
  );
}
